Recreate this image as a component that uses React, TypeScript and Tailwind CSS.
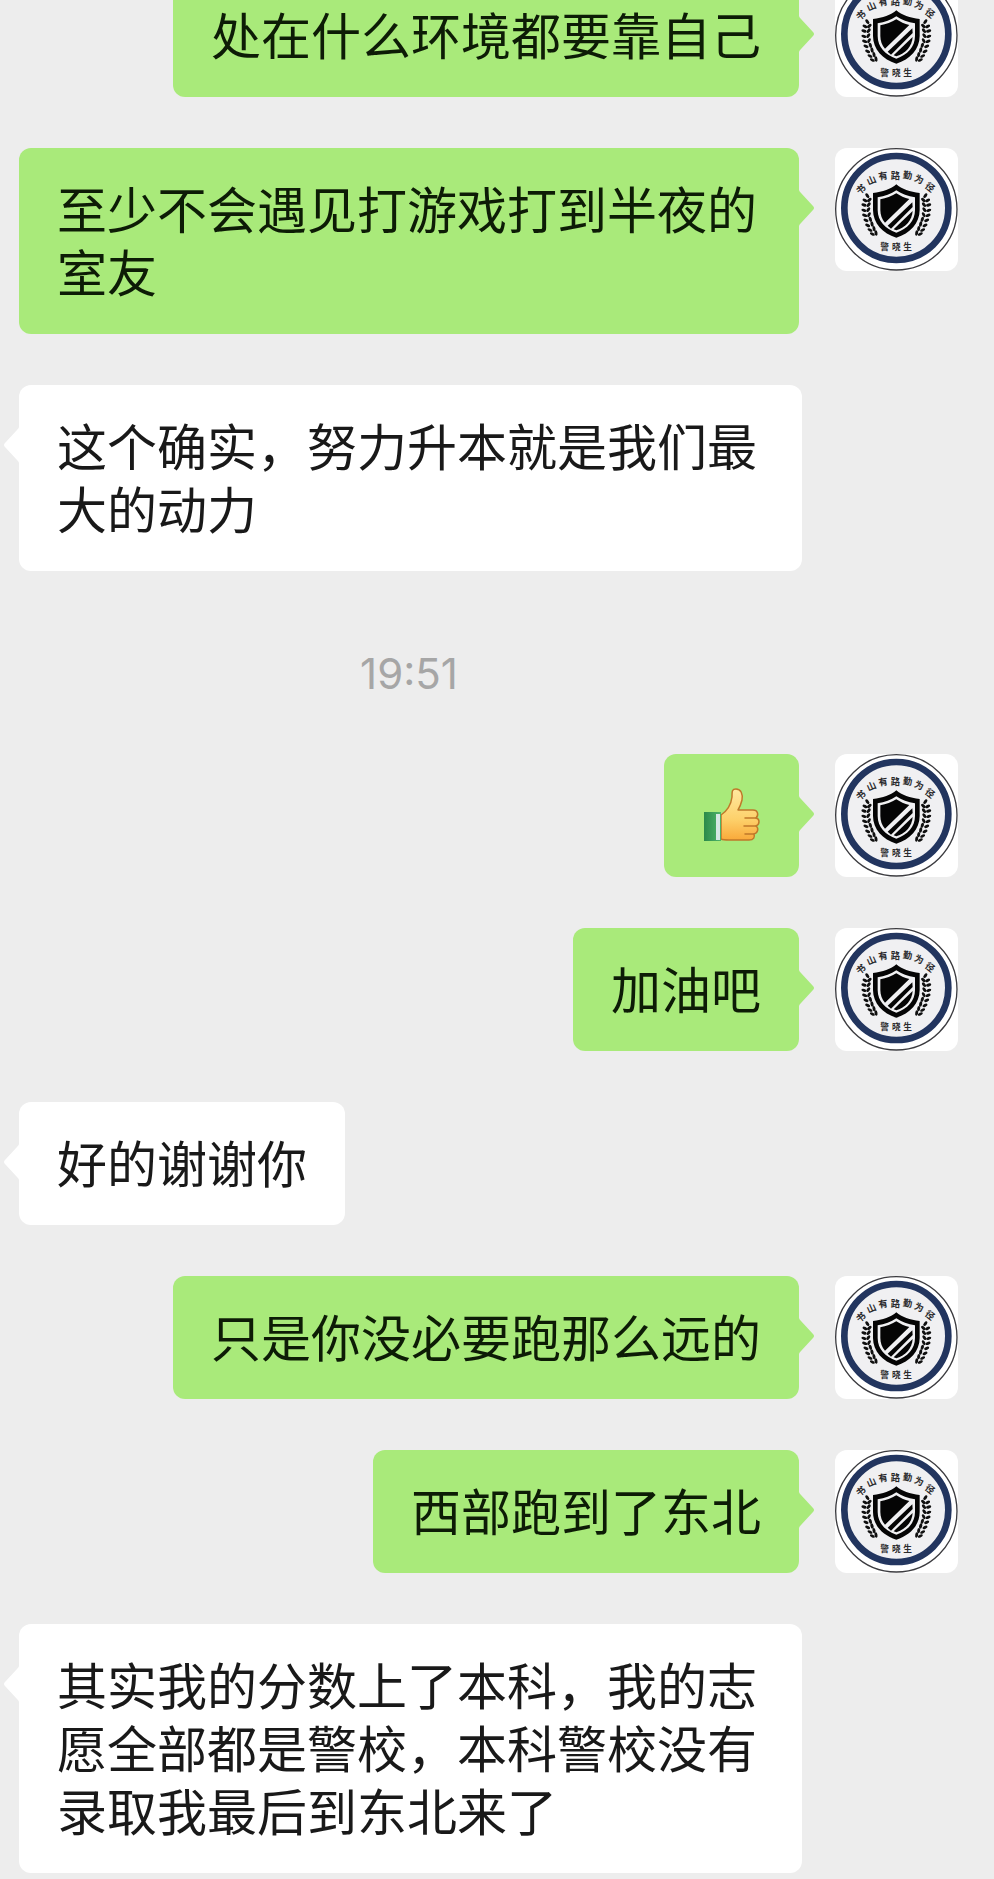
import clsx from "clsx";

type Message = {
  from: "me" | "peer";
  text?: string;
  emoji?: boolean;
  time?: string;
};

const messages: Message[] = [
  { from: "me", text: "处在什么环境都要靠自己" },
  { from: "me", text: "至少不会遇见打游戏打到半夜的室友" },
  { from: "peer", text: "这个确实，努力升本就是我们最大的动力" },
  { from: "me", emoji: true, time: "19:51" },
  { from: "me", text: "加油吧" },
  { from: "peer", text: "好的谢谢你" },
  { from: "me", text: "只是你没必要跑那么远的" },
  { from: "me", text: "西部跑到了东北" },
  { from: "peer", text: "其实我的分数上了本科，我的志愿全部都是警校，本科警校没有录取我最后到东北来了" },
];

const motto = [
  { c: "书", x: 123, y: 166, r: -38 },
  { c: "山", x: 154, y: 139, r: -24 },
  { c: "有", x: 189, y: 126, r: -10 },
  { c: "路", x: 226, y: 126, r: 0 },
  { c: "勤", x: 263, y: 124, r: 8 },
  { c: "为", x: 297, y: 136, r: 24 },
  { c: "径", x: 330, y: 160, r: 38 },
];

// one side of the laurel: leaf centre and angle, bottom to top
const leaves = [
  [157, 300, 25], [168, 297, 80],
  [150, 288, 25], [162, 284, 78],
  [143, 274, 25], [156, 270, 75],
  [138, 259, 22], [151, 256, 72],
  [134, 244, 20], [147, 242, -62],
  [132, 229, 16], [145, 227, -55],
  [132, 213, 14], [146, 212, -48],
  [135, 199, 25], [148, 198, -38],
  [142, 185, 50],
];

function Laurel() {
  return (
    <g fill="#101010">
      {leaves.map(([x, y, r], i) => (
        <ellipse key={i} cx={x} cy={y} rx="8" ry="4.5" transform={`rotate(${r} ${x} ${y})`} />
      ))}
    </g>
  );
}

function Avatar() {
  return (
    <svg viewBox="45 42 369 369" className="size-[123px] shrink-0 rounded-xl bg-white" role="img" aria-label="警晓生">
      <circle cx="229" cy="226" r="182" fill="#fff" stroke="#3c3c40" strokeWidth="4" />
      <circle cx="229" cy="222" r="156" fill="#f0f0f2" stroke="#22355f" strokeWidth="20" />
      <g fill="#2a2a2c" fontFamily="'Noto Sans CJK SC', sans-serif" fontWeight="700" textAnchor="middle">
        {motto.map((m) => (
          <text key={m.c} x={m.x} y={m.y + 10} fontSize="28" transform={`rotate(${m.r} ${m.x} ${m.y})`}>
            {m.c}
          </text>
        ))}
        <text x="194" y="347" fontSize="26">警</text>
        <text x="229" y="347" fontSize="26">晓</text>
        <text x="263" y="347" fontSize="26">生</text>
      </g>
      <Laurel />
      <g transform="matrix(-1 0 0 1 458 0)">
        <Laurel />
      </g>
      <path d="M229 151C213 165 188 174 159 177V228C159 268 188 298 229 311C270 298 299 268 299 228V177C270 174 245 165 229 151Z" fill="#050505" />
      <path d="M229 169C213 180 194 187 173 190V228C173 261 196 285 229 296C262 285 285 261 285 228V190C264 187 245 180 229 169Z" fill="#f0f0f2" />
      <path d="M229 178C214 187 199 193 181 196V228C181 243 186 256 195 266L268 195C253 192 241 186 229 178Z" fill="#050505" />
      <path d="M277 205L203 275L213 284L278 219Z" fill="#050505" />
      <path d="M278 231L221 286L229 289C258 279 276 259 278 231Z" fill="#050505" />
    </svg>
  );
}

function ThumbsUp() {
  return (
    <svg viewBox="3 -2 59 63" className="h-[63px] w-[59px]" role="img" aria-label="赞">
      <defs>
        <linearGradient id="skin" x1="0" y1="0" x2="0" y2="1">
          <stop offset="0" stopColor="#ffe9a0" />
          <stop offset="0.6" stopColor="#fdd06a" />
          <stop offset="1" stopColor="#f9a93a" />
        </linearGradient>
        <linearGradient id="cuff" x1="0" y1="0" x2="1" y2="0">
          <stop offset="0" stopColor="#2b8a4a" />
          <stop offset="1" stopColor="#4fb56a" />
        </linearGradient>
      </defs>
      <path
        d="M22 31C28 27 32 21 33 13C33 7 33 5 37 5C42 5 44 10 43 16C42 20 41 23 39 26H54C59 26 60 31 57 34C61 35 61 40 57 42C60 44 59 49 55 50C56 53 55 56 50 56H30C26 56 24 56 22 55Z"
        fill="url(#skin)"
        stroke="#c0782a"
        strokeWidth="1.5"
        strokeLinejoin="round"
      />
      <path d="M46 34H57M45 42H57M46 50H55" stroke="#c0782a" strokeWidth="1.5" strokeLinecap="round" />
      <rect x="5" y="28" width="17" height="29" fill="url(#cuff)" />
      <rect x="17" y="30" width="4" height="26" fill="#d5e8e4" />
    </svg>
  );
}

function Tail({ mine }: { mine: boolean }) {
  return (
    <svg
      viewBox="0 0 15 36"
      className={clsx("absolute top-[42px] h-9 w-[15px]", mine ? "left-full text-[#a9ea7a]" : "right-full -scale-x-100 text-white")}
      aria-hidden="true"
    >
      <path d="M0 0Q0 1 2 3L14 16Q16 18 14 20L2 33Q0 35 0 36Z" fill="currentColor" />
    </svg>
  );
}

function Bubble({ message }: { message: Message }) {
  const mine = message.from === "me";
  return (
    <div className={clsx("flex items-start gap-9", mine ? "justify-end pr-9" : "justify-start")}>
      <div
        className={clsx(
          "relative max-w-[783px] rounded-xl px-[38px] pt-7 pb-8",
          mine ? "bg-[#a9ea7a] text-[#0d1c06]" : "bg-white text-[#191919]"
        )}
      >
        <Tail mine={mine} />
        {message.emoji ? <ThumbsUp /> : <p className="text-[50px] leading-[63px] break-all">{message.text}</p>}
      </div>
      {mine && <Avatar />}
    </div>
  );
}

export default function App() {
  return (
    <main className="min-h-screen overflow-hidden bg-[#ededed] pb-1.5 font-['Noto_Sans_CJK_SC',sans-serif]">
      {/* the oldest message is partly scrolled out at the top */}
      <ul className="-mt-[26px] flex flex-col gap-[51px] pl-[19px]">
        {messages.map((m, i) => (
          <li key={i}>
            {m.time && (
              <time className="mb-[49px] block pt-5 pr-[195px] text-center font-['Inter',sans-serif] text-[42px] leading-[63px] text-[#a6a6a6]">
                {m.time}
              </time>
            )}
            <Bubble message={m} />
          </li>
        ))}
      </ul>
    </main>
  );
}
